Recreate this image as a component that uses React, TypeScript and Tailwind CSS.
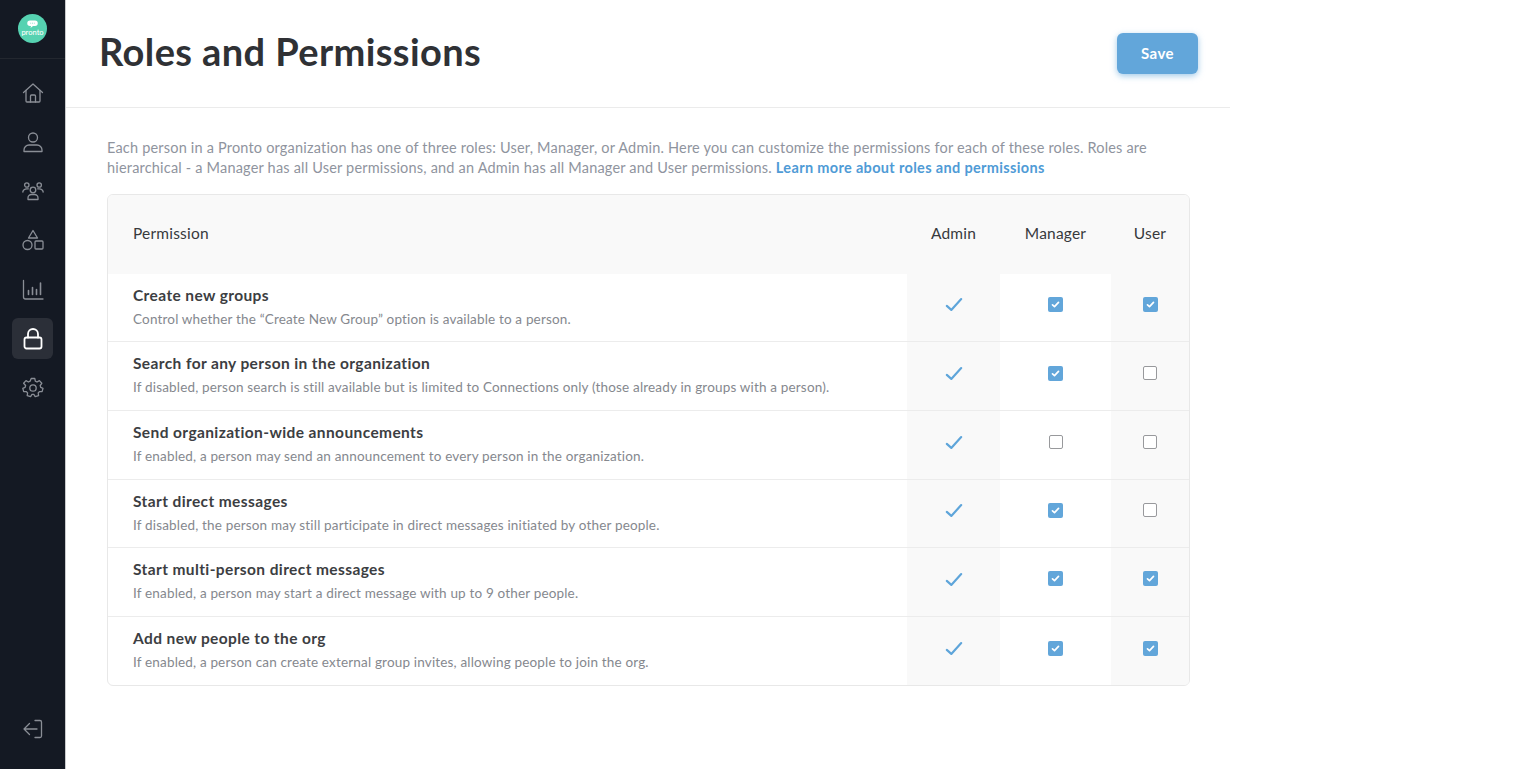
import type { ReactNode } from 'react';

const ROWS = [
  { title: 'Create new groups', desc: 'Control whether the “Create New Group” option is available to a person.', manager: true, user: true },
  { title: 'Search for any person in the organization', desc: 'If disabled, person search is still available but is limited to Connections only (those already in groups with a person).', manager: true, user: false },
  { title: 'Send organization-wide announcements', desc: 'If enabled, a person may send an announcement to every person in the organization.', manager: false, user: false },
  { title: 'Start direct messages', desc: 'If disabled, the person may still participate in direct messages initiated by other people.', manager: true, user: false },
  { title: 'Start multi-person direct messages', desc: 'If enabled, a person may start a direct message with up to 9 other people.', manager: true, user: true },
  { title: 'Add new people to the org', desc: 'If enabled, a person can create external group invites, allowing people to join the org.', manager: true, user: true },
];

function NavIcon({ children, active }: { children: ReactNode; active?: boolean }) {
  return (
    <div className={`w-[41px] h-[41px] rounded-md flex items-center justify-center ${active ? 'bg-[#2b2f38] text-white' : 'text-[#8a8e96]'}`}>
      <svg width="22" height="22" viewBox="0 0 22 22" fill="none" stroke="currentColor" strokeWidth={active ? 1.8 : 1.3} strokeLinecap="round" strokeLinejoin="round">
        {children}
      </svg>
    </div>
  );
}

function Checkbox({ checked }: { checked: boolean }) {
  if (!checked) {
    return <div className="w-[14px] h-[14px] rounded-[2px] border-[1.5px] border-[#98999c] bg-white" />;
  }
  return (
    <div className="w-[15px] h-[15px] rounded-[2px] bg-[#62a6da] flex items-center justify-center">
      <svg width="9" height="9" viewBox="0 0 9 9" fill="none" stroke="white" strokeWidth="1.7" strokeLinecap="round" strokeLinejoin="round">
        <path d="M1.5 4.8 3.5 6.6 7.5 2.4" />
      </svg>
    </div>
  );
}

export default function App() {
  return (
    <div className="flex h-[769px] overflow-hidden bg-white text-[#37393d]" style={{ fontFamily: 'Lato, "Open Sans", sans-serif' }}>
      <aside className="w-[66px] shrink-0 bg-[#141923] flex flex-col items-center border-r border-[#c9cacc]">
        <div className="w-full h-[59px] shrink-0 border-b border-[#23272f] flex justify-center pt-[14px]">
          <div className="w-[29px] h-[29px] rounded-full bg-[#56d2b1] flex flex-col items-center">
            <svg width="11" height="9" viewBox="0 0 11 9" className="mt-[6px]">
              <path d="M3 0.5h5a2.5 2.5 0 0 1 0 5.5H6L3.5 8 4 6H3A2.5 2.5 0 0 1 3 0.5z" fill="white" />
              <path d="M3.5 3.2h.6M5.2 3.2h.6M6.9 3.2h.6" stroke="#56d2b1" strokeWidth="1" />
            </svg>
            <span className="text-[7.5px] leading-[7px] text-white font-medium">pronto</span>
          </div>
        </div>
        <nav className="flex flex-col items-center gap-[8.3px] pt-[13px]">
          <NavIcon>
            <path d="M1.5 10.5 11 2l9.5 8.5" />
            <path d="M4 8.5V19a1 1 0 0 0 1 1h12a1 1 0 0 0 1-1V8.5" />
            <path d="M8.5 20v-6a1 1 0 0 1 1-1h3a1 1 0 0 1 1 1v6" />
          </NavIcon>
          <NavIcon>
            <circle cx="11" cy="6.5" r="4.5" />
            <path d="M2 20.5v-1.5a5 5 0 0 1 5-5h8a5 5 0 0 1 5 5v1.5z" />
          </NavIcon>
          <NavIcon>
            <circle cx="4.8" cy="5" r="2.2" />
            <circle cx="17.2" cy="5" r="2.2" />
            <circle cx="11" cy="10" r="2.8" />
            <path d="M0.8 12a4 4 0 0 1 4-3.2h1.5" />
            <path d="M21.2 12a4 4 0 0 0-4-3.2h-1.5" />
            <path d="M6 19.5V18a3.5 3.5 0 0 1 3.5-3.5h3A3.5 3.5 0 0 1 16 18v1.5z" />
          </NavIcon>
          <NavIcon>
            <path d="M11 1.5 15.5 9h-9z" />
            <circle cx="5.5" cy="16" r="4.5" />
            <rect x="13" y="12" width="8" height="8" rx="1" />
          </NavIcon>
          <NavIcon>
            <path d="M1.5 1.5V18a2 2 0 0 0 2 2h17.5" />
            <path d="M6.5 15.5v-4M10.5 15.5v-7M14.5 15.5v-5M18.5 15.5V4" strokeWidth="1.6" />
          </NavIcon>
          <NavIcon active>
            <rect x="2.5" y="9.5" width="17" height="11" rx="2" />
            <path d="M6 9.5V6a5 5 0 0 1 10 0v3.5" />
          </NavIcon>
          <NavIcon>
            <circle cx="11" cy="11" r="3.2" />
            <path d="M9.2 1.5h3.6l.5 2.7 1.7.8 2.4-1.4 2.4 2.7-1.6 2.2.5 1.8 2.3 1-.9 3.4-2.7-.1-1.2 1.4.4 2.7-3.4 1-1.4-2.3h-1.8l-1.4 2.3-3.4-1 .4-2.7-1.2-1.4-2.7.1-.9-3.4 2.3-1 .5-1.8L1.6 6.3 4 3.6l2.4 1.4 1.7-.8z" />
          </NavIcon>
        </nav>
        <div className="mt-auto mb-[20px]">
          <NavIcon>
            <path d="M13 2.5h5a1.5 1.5 0 0 1 1.5 1.5v14a1.5 1.5 0 0 1-1.5 1.5h-5" />
            <path d="M15 11H2M7.5 5.5 2 11l5.5 5.5" />
          </NavIcon>
        </div>
      </aside>

      <main className="w-[1164px] shrink-0">
        <header className="h-[108px] border-b border-[#ebebeb] flex items-center justify-between pl-[33px] pr-[32px]">
          <h1 className="text-[38px] leading-none font-bold tracking-[0.4px] mb-[6px] text-[#2f3135]">Roles and Permissions</h1>
          <button type="button" className="w-[81px] h-[41px] rounded-md bg-[#62a6da] text-white text-[15px] font-bold tracking-[0.4px] shadow-[0_2px_6px_rgba(98,166,218,0.6)]">
            Save
          </button>
        </header>

        <div className="pl-[41px] pr-[40px] pt-[30px]">
          <p className="text-[14.5px] leading-[20px] tracking-[0.19px] text-[#8f949e]">
            Each person in a Pronto organization has one of three roles: User, Manager, or Admin. Here you can customize the permissions for each of these roles. Roles are hierarchical - a Manager has all User permissions, and an Admin has all Manager and User permissions.{' '}
            <a className="font-bold tracking-[0.34px] text-[#4f9bd6]">Learn more about roles and permissions</a>
          </p>

          <div className="mt-[16px] border border-[#e8e8e8] rounded-md overflow-hidden">
            <div className="grid grid-cols-[1fr_93px_111px_78px] h-[78.6px] pb-[1px] bg-[#f9f9f9] items-center text-[15.5px] tracking-[0.2px] text-[#37393d]">
              <div className="pl-[25px]">Permission</div>
              <div className="text-center">Admin</div>
              <div className="text-center">Manager</div>
              <div className="text-center">User</div>
            </div>
            {ROWS.map((row, i) => (
              <div key={row.title} className={`grid grid-cols-[1fr_93px_111px_78px] h-[68.65px] ${i < ROWS.length - 1 ? 'border-b border-[#ececec]' : ''}`}>
                <div className="pl-[25px] pt-[11px]">
                  <div className="text-[15.5px] leading-[20px] font-bold tracking-[0.39px] text-[#3c3e42]">{row.title}</div>
                  <div className="text-[13.5px] leading-[18px] mt-[5px] tracking-[0.17px] text-[#85888e]">{row.desc}</div>
                </div>
                <div className="bg-[#f9f9f9] flex items-center justify-center pb-[5px]">
                  <svg width="18" height="15" viewBox="0 0 20 16" fill="none" stroke="#5ea5da" strokeWidth="2.4" strokeLinecap="round" strokeLinejoin="round">
                    <path d="M2 9.5 7 14 18 2" />
                  </svg>
                </div>
                <div className="flex items-center justify-center pb-[6px]">
                  <Checkbox checked={row.manager} />
                </div>
                <div className="bg-[#f9f9f9] flex items-center justify-center pb-[6px]">
                  <Checkbox checked={row.user} />
                </div>
              </div>
            ))}
          </div>
        </div>
      </main>
    </div>
  );
}
